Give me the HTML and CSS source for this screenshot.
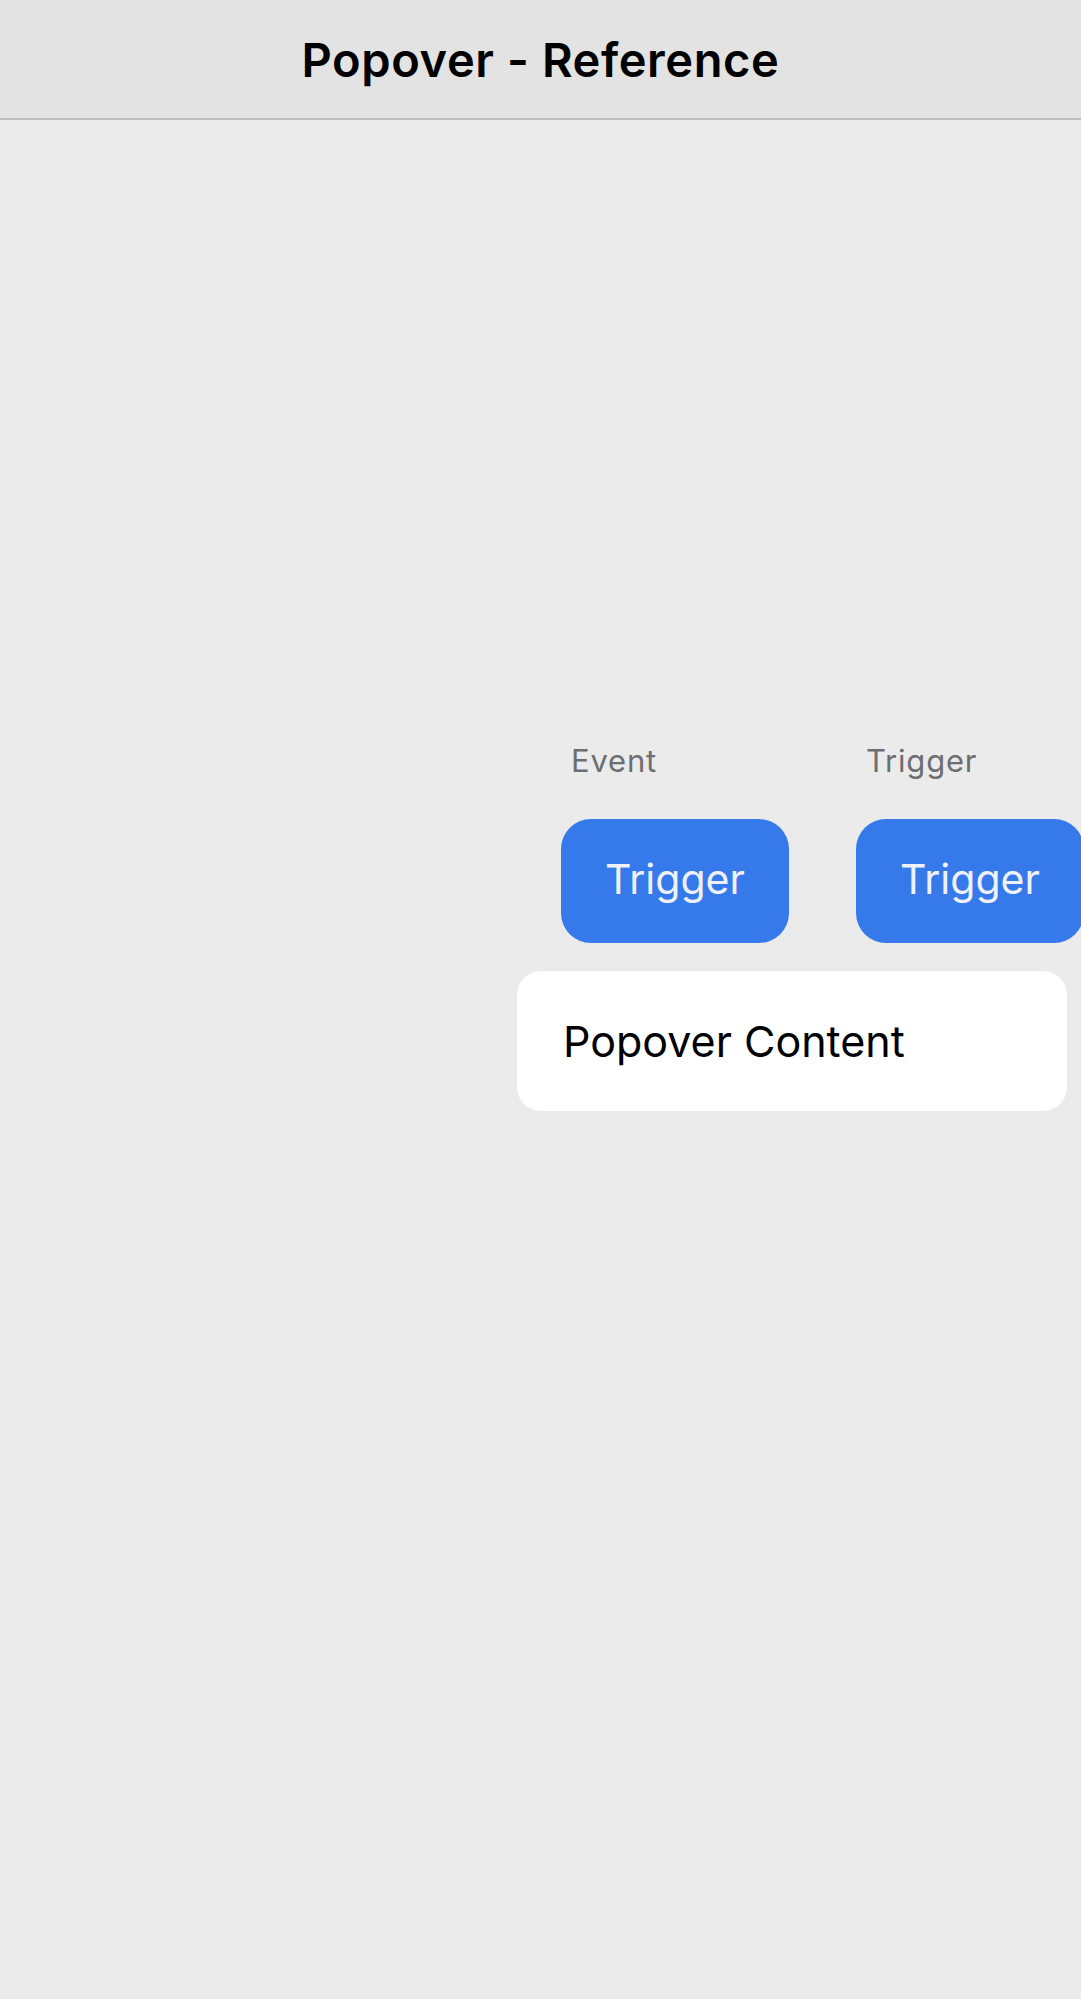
FILE: index.html
```html
<!DOCTYPE html>
<html lang="en">
<head>
    <meta charset="UTF-8">
    <meta name="viewport" content="width=device-width, initial-scale=1.0">
    <title>Popover - Reference</title>
    <link rel="stylesheet" href="styles.css">
</head>
<body>
    <header class="nav-bar">
        <h1 class="nav-title">Popover - Reference</h1>
    </header>

    <main class="stage">
        <div class="controls">
            <div class="field">
                <span class="field-label">Event</span>
                <button type="button" class="trigger">Trigger</button>
                <div class="popover">Popover Content</div>
            </div>
            <div class="field">
                <span class="field-label">Trigger</span>
                <button type="button" class="trigger">Trigger</button>
            </div>
        </div>
    </main>
</body>
</html>
```

FILE: styles.css
```css
body {
    margin: 0;
    padding: 0;
    background-color: #ebebeb;
    font-family: Inter, "Noto Sans", sans-serif;
    overflow: hidden;
}

.nav-bar {
    height: 118px;
    background-color: #e3e3e3;
    border-bottom: 2px solid #bdbdbd;
    display: flex;
    align-items: center;
    justify-content: center;
}

.nav-title {
    margin: 0;
    font-size: 47px;
    font-weight: 600;
    letter-spacing: 0.6px;
    color: #000;
}

.stage {
    padding: 621px 0 0 561px;
    height: 1260px;
    overflow: hidden;
}

.controls {
    display: flex;
    gap: 67px;
}

.field {
    position: relative;
    display: flex;
    flex-direction: column;
    width: 228px;
    flex-shrink: 0;
}

.field-label {
    padding-left: 10px;
    font-size: 31px;
    letter-spacing: 0.8px;
    line-height: 40px;
    color: #6b6e72;
    margin-bottom: 38px;
}

.trigger {
    width: 228px;
    height: 124px;
    padding: 0 0 5px;
    border: none;
    border-radius: 30px;
    background-color: #3679ea;
    color: #eef1f7;
    font-family: Inter, "Noto Sans", sans-serif;
    font-size: 41px;
    cursor: pointer;
}

.popover {
    position: absolute;
    top: calc(100% + 28px);
    left: -44px;
    width: 550px;
    height: 140px;
    box-sizing: border-box;
    padding-left: 46px;
    display: flex;
    align-items: center;
    background-color: #fff;
    border-radius: 24px;
    font-size: 43px;
    color: #000;
}
```
